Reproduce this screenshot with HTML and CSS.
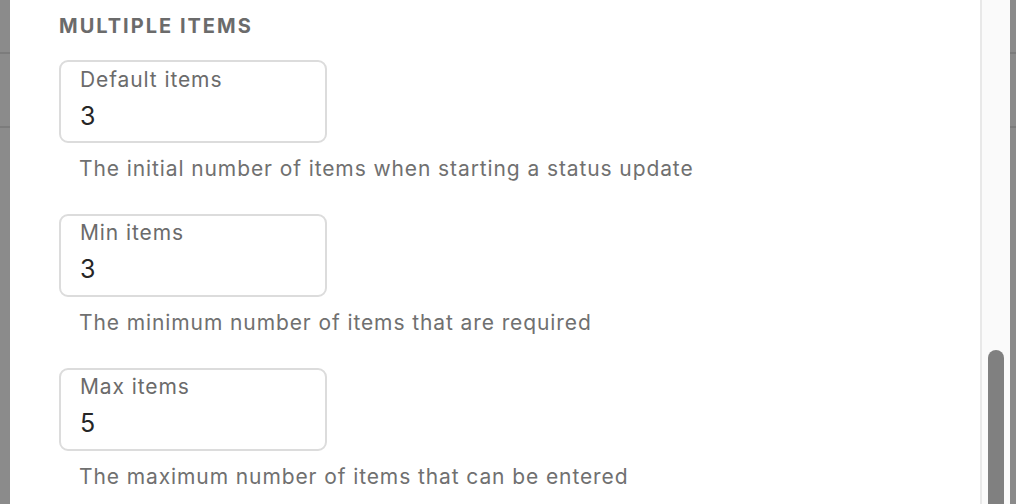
FILE: index.html
```html
<!DOCTYPE html>
<html>
<head>
<meta charset="utf-8">
<link rel="stylesheet" href="styles.css">
</head>
<body>
<div class="frame">
  <div class="strip strip-left"></div>
  <main class="panel">
    <h2 class="heading">MULTIPLE ITEMS</h2>
    <div class="field">
      <div class="box">
        <label class="label">Default items</label>
        <div class="value">3</div>
      </div>
      <p class="help">The initial number of items when starting a status update</p>
    </div>
    <div class="field">
      <div class="box">
        <label class="label">Min items</label>
        <div class="value">3</div>
      </div>
      <p class="help">The minimum number of items that are required</p>
    </div>
    <div class="field">
      <div class="box">
        <label class="label">Max items</label>
        <div class="value">5</div>
      </div>
      <p class="help">The maximum number of items that can be entered</p>
    </div>
  </main>
  <div class="scrolltrack"><div class="thumb"></div></div>
  <div class="strip strip-right"></div>
</div>
</body>
</html>
```
FILE: styles.css
```css
html, body {
  margin: 0;
  padding: 0;
}
body {
  width: 1016px;
  height: 504px;
  overflow: hidden;
  font-family: Inter, "Liberation Sans", sans-serif;
}
.frame {
  display: flex;
  height: 504px;
}
.strip {
  background:
    linear-gradient(#7c7c7c, #7c7c7c) 0 52px / 100% 2px no-repeat,
    linear-gradient(#7c7c7c, #7c7c7c) 0 126px / 100% 2px no-repeat,
    #8b8b8b;
}
.strip-left { width: 10px; }
.strip-right { width: 6px; }
.panel {
  flex: 1;
  background: #fff;
  padding: 0 0 0 49px;
  display: flex;
  flex-direction: column;
}
.heading {
  margin: 14px 0 22px;
  font-size: 20px;
  line-height: 24px;
  font-weight: 700;
  color: #6b6b6b;
  letter-spacing: 2px;
}
.field {
  display: flex;
  flex-direction: column;
  margin-bottom: 32.4px;
}
.box {
  width: 245px;
  height: 79px;
  border: 2px solid #dcdcdc;
  border-radius: 9px;
  padding: 0 0 0 19px;
  box-sizing: content-box;
  display: flex;
  flex-direction: column;
}
.label {
  margin-top: 4.5px;
  font-size: 21px;
  line-height: 26px;
  color: #6b6b6b;
  letter-spacing: 0.9px;
}
.value {
  margin-top: 8px;
  font-size: 25px;
  line-height: 30px;
  color: #262626;
}
.help {
  margin: 12.6px 0 0 20px;
  font-size: 21px;
  line-height: 26px;
  color: #707070;
  letter-spacing: 0.9px;
}
.scrolltrack {
  width: 28px;
  background: #fafafa;
  border-left: 2px solid #e8e8e8;
  position: relative;
}
.thumb {
  position: absolute;
  left: 6px;
  top: 350px;
  width: 16px;
  height: 170px;
  border-radius: 8px;
  background: #808080;
}
```
